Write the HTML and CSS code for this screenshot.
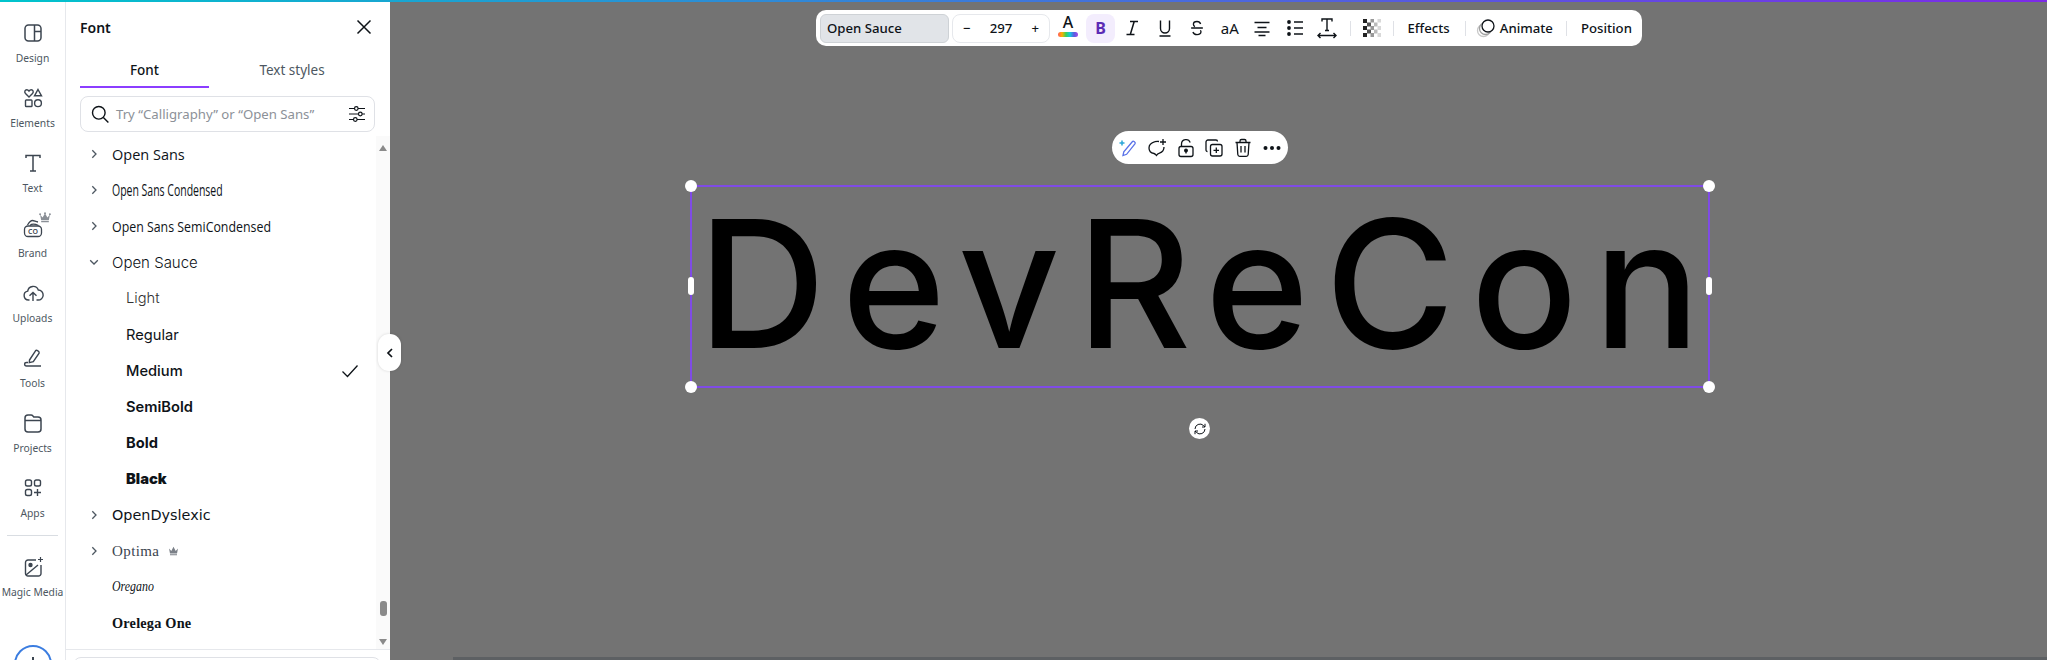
FILE: index.html
```html
<!DOCTYPE html>
<html lang="en">
<head>
  <meta charset="UTF-8">
  <title>Font panel</title>
  <link rel="stylesheet" href="styles.css">
</head>
<body>
  <div class="topline"></div>
  <div class="main">
    <nav class="rail">
      <div class="rail-item">
        <svg width="24" height="24" viewBox="0 0 24 24" fill="none" stroke="#3c4550" stroke-width="1.5"><rect x="4" y="4" width="16" height="16" rx="3.500"/><path d="M13.500 4v16M13.500 10.500H20"/></svg>
        <span>Design</span>
      </div>
      <div class="rail-item">
        <svg width="24" height="24" viewBox="0 0 24 24" fill="none" stroke="#3c4550" stroke-width="1.400"><path d="M8 11 4.500 7.500C3 5.800 4 3.700 5.800 3.700c1 0 1.700.6 2.200 1.300.5-.7 1.200-1.300 2.200-1.300 1.800 0 2.800 2.100 1.300 3.800z"/><path d="M17 3.500 20.500 9.800h-7z"/><rect x="4.500" y="14" width="6.500" height="6.500" rx=".8"/><circle cx="17" cy="17.200" r="3.400"/></svg>
        <span>Elements</span>
      </div>
      <div class="rail-item">
        <svg width="24" height="24" viewBox="0 0 24 24" fill="none" stroke="#3c4550" stroke-width="1.500"><path d="M5 7V4.500h14V7M12 4.500V20M9 20h6"/></svg>
        <span>Text</span>
      </div>
      <div class="rail-item">
        <svg class="rail-crown" width="12" height="11" viewBox="0 0 11 10" fill="#8a8f96"><circle cx="1" cy="2" r=".9"/><circle cx="5.500" cy="1" r=".9"/><circle cx="10" cy="2" r=".9"/><path d="M1 2.500 3.300 5 5.500 1 7.700 5 10 2.500 9 7.500H2zM2 8.300h7v1H2z"/></svg>
        <svg width="24" height="24" viewBox="0 0 24 24" fill="none" stroke="#3c4550" stroke-width="1.300"><path d="M6.500 9c1.500-2.500 3-4.500 5-4.500 1.500 0 3 1 5.500 1.500M9 9.500c1.500-1.500 5-1.500 8.500 0"/><rect x="3.500" y="10" width="17" height="10.500" rx="3.500"/><text x="12" y="17.800" text-anchor="middle" font-family="Noto Sans" font-size="7" font-weight="600" fill="#3c4550" stroke="none">CO</text></svg>
        <span>Brand</span>
      </div>
      <div class="rail-item">
        <svg width="24" height="24" viewBox="0 0 24 24" fill="none" stroke="#3c4550" stroke-width="1.400"><path d="M8.500 19H7.500a4.500 4.500 0 0 1-.8-8.900A5.500 5.500 0 0 1 17.300 9a5 5 0 0 1-.3 10h-1.500"/><path d="M12 20v-8M8.500 14.800 12 11.500l3.500 3.300"/></svg>
        <span>Uploads</span>
      </div>
      <div class="rail-item">
        <svg width="24" height="24" viewBox="0 0 24 24" fill="none" stroke="#3c4550" stroke-width="1.400"><path d="M8.500 14 14.500 4.800c1-1.300 4.300.7 3.600 2.400l-5.800 8.500-4 .9z"/><path d="M7 16.500H5.500c-2.500 0-2.500 3.500 0 3.500H20"/></svg>
        <span>Tools</span>
      </div>
      <div class="rail-item">
        <svg width="24" height="24" viewBox="0 0 24 24" fill="none" stroke="#3c4550" stroke-width="1.500"><path d="M4 7a3 3 0 0 1 3-3h3c1 0 1.500.4 2.200 1.200l.6.800H17a3 3 0 0 1 3 3v9a3 3 0 0 1-3 3H7a3 3 0 0 1-3-3z"/><path d="M4 9.500h16"/></svg>
        <span>Projects</span>
      </div>
      <div class="rail-item">
        <svg width="24" height="24" viewBox="0 0 24 24" fill="none" stroke="#3c4550" stroke-width="1.400"><rect x="4.500" y="4" width="6" height="6" rx="1.800"/><rect x="13.500" y="4" width="6" height="6" rx="1.800"/><rect x="4.500" y="13.500" width="6" height="6" rx="1.800"/><path d="M16.500 13v7M13 16.500h7"/></svg>
        <span>Apps</span>
      </div>
      <div class="rail-line"></div>
      <div class="rail-item">
        <svg width="24" height="24" viewBox="0 0 24 24" fill="none" stroke="#3c4550" stroke-width="1.400"><path d="M15 5H7a2.500 2.500 0 0 0-2.500 2.500v11A2.500 2.500 0 0 0 7 21h10.500a2.500 2.500 0 0 0 2.500-2.500V10"/><path d="M5 20 17 10"/><circle cx="9.500" cy="10" r="1.500" fill="#3c4550"/><path d="M19.500 2v5M17 4.500h5" stroke-width="1.200"/></svg>
        <span>Magic Media</span>
      </div>
      <div class="rail-circle"><div class="rail-plus"></div></div>
    </nav>

    <aside class="panel">
      <div class="panel-head">
        <h1>Font</h1>
        <svg width="18" height="18" viewBox="0 0 18 18" fill="none" stroke="#0e1318" stroke-width="1.500"><path d="M2.500 2.500l13 13M15.500 2.500l-13 13"/></svg>
      </div>
      <div class="tabs">
        <div class="tab active">Font</div>
        <div class="tab">Text styles</div>
      </div>
      <div class="search">
        <svg width="20" height="20" viewBox="0 0 20 20" fill="none" stroke="#0e1318" stroke-width="1.400"><circle cx="8.800" cy="8.800" r="6.300"/><path d="M13.400 13.400l5 5"/></svg>
        <span class="search-text">Try “Calligraphy” or “Open Sans”</span>
        <svg width="18" height="18" viewBox="0 0 18 18" fill="none" stroke="#0e1318" stroke-width="1.200"><path d="M1 3.500h5.500M10 3.500h7M1 9h9.500M14 9h3M1 14.500h4.500M9 14.500h8"/><circle cx="8.300" cy="3.500" r="1.800"/><circle cx="12.300" cy="9" r="1.800"/><circle cx="7.300" cy="14.500" r="1.800"/></svg>
      </div>
      <div class="list-wrap">
        <div class="list">
          <div class="row"><svg class="chev" width="12" height="12" viewBox="0 0 12 12"><path d="M4.300 2.200 8 6 4.300 9.800"/></svg><span class="f-sans">Open Sans</span></div>
          <div class="row"><svg class="chev" width="12" height="12" viewBox="0 0 12 12"><path d="M4.300 2.200 8 6 4.300 9.800"/></svg><span class="f-cond">Open Sans Condensed</span></div>
          <div class="row"><svg class="chev" width="12" height="12" viewBox="0 0 12 12"><path d="M4.300 2.200 8 6 4.300 9.800"/></svg><span class="f-semi">Open Sans SemiCondensed</span></div>
          <div class="row"><svg class="chev" width="12" height="12" viewBox="0 0 12 12"><path d="M2.200 4.300 6 8l3.800-3.700"/></svg><span class="f-sauce">Open Sauce</span></div>
          <div class="row sub w300">Light</div>
          <div class="row sub w400">Regular</div>
          <div class="row sub w500">Medium
            <svg class="check" width="18" height="18" viewBox="0 0 18 18" fill="none" stroke="#0e1318" stroke-width="1.300"><path d="M1.500 9.500l5 5L16.500 3.500"/></svg>
          </div>
          <div class="row sub w600">SemiBold</div>
          <div class="row sub w700">Bold</div>
          <div class="row sub w900">Black</div>
          <div class="row"><svg class="chev" width="12" height="12" viewBox="0 0 12 12"><path d="M4.300 2.200 8 6 4.300 9.800"/></svg><span class="f-dys">OpenDyslexic</span></div>
          <div class="row"><svg class="chev" width="12" height="12" viewBox="0 0 12 12"><path d="M4.300 2.200 8 6 4.300 9.800"/></svg><span class="f-opt">Optima</span>
            <svg class="crown" width="11" height="10" viewBox="0 0 11 10" fill="#7b8088"><path d="M1 2.500 3.300 5 5.500.8 7.700 5 10 2.500 9 7.500H2zM2 8.300h7v1H2z"/></svg>
          </div>
          <div class="row"><span class="chev-gap"></span><span class="f-ore">Oregano</span></div>
          <div class="row"><span class="chev-gap"></span><span class="f-orl">Orelega One</span></div>
        </div>
        <div class="scroll">
          <div class="arrow-up"></div>
          <div class="thumb"></div>
          <div class="arrow-down"></div>
        </div>
      </div>
      <div class="panel-foot"><div class="foot-box"></div></div>
      <div class="collapse">
        <svg width="8" height="12" viewBox="0 0 8 12" fill="none" stroke="#0e1318" stroke-width="1.700"><path d="M6 2 2 6l4 4"/></svg>
      </div>
    </aside>

    <main class="stage">
      <div class="toolbar">
        <div class="font-box">Open Sauce</div>
        <div class="size-box"><span>−</span><span>297</span><span>+</span></div>
        <div class="tool color-tool">
          <span class="color-a">A</span>
          <span class="rainbow"></span>
        </div>
        <div class="bold-tool">B</div>
        <div class="tool">
          <svg width="20" height="20" viewBox="0 0 20 20" fill="none" stroke="#0e1318" stroke-width="1.500"><path d="M8 3.500h8M4.500 16.500h8M12.200 3.500 8.300 16.500"/></svg>
        </div>
        <div class="tool">
          <svg width="20" height="20" viewBox="0 0 20 20" fill="none" stroke="#0e1318" stroke-width="1.400"><path d="M5.500 2.500v8a4.500 4.500 0 0 0 9 0v-8M4.500 18h11"/></svg>
        </div>
        <div class="tool">
          <svg width="18" height="18" viewBox="0 0 20 20" fill="none" stroke="#0e1318" stroke-width="1.500"><path d="M14 5.500c-.5-1.800-2-2.700-4-2.700-2.300 0-4 1.200-4 3.100 0 1.200.7 2.100 1.700 2.600M13.800 12.500c.4.600.6 1.100.6 1.800 0 1.800-1.900 3-4.400 3-2.300 0-4-1-4.500-2.900M3.500 10h13"/></svg>
        </div>
        <div class="tool case-tool">aA</div>
        <div class="tool">
          <svg width="20" height="20" viewBox="0 0 20 20" fill="none" stroke="#0e1318" stroke-width="1.500"><path d="M2.500 4.500h15M5.500 9.500h9M2.500 14h15M6.500 17.500h7" /></svg>
        </div>
        <div class="tool">
          <svg width="20" height="20" viewBox="0 0 20 20" fill="none" stroke="#0e1318" stroke-width="1.500"><circle cx="4" cy="4" r="1.900" fill="#0e1318" stroke="none"/><circle cx="4" cy="10" r="1.900" fill="#0e1318" stroke="none"/><circle cx="4" cy="16" r="1.900" fill="#0e1318" stroke="none"/><path d="M9 4h9M9 10h9M9 16h9"/></svg>
        </div>
        <div class="tool">
          <svg width="22" height="22" viewBox="0 0 22 22" fill="none" stroke="#0e1318" stroke-width="1.400"><path d="M6 4.500V2h10v2.500M11 2v11.500M9 13.500h4M2 18.500h18M4.500 16 2 18.500 4.500 21M17.500 16 20 18.500 17.500 21"/></svg>
        </div>
        <div class="sep first-sep"></div>
        <div class="tool trans-tool">
          <svg width="18" height="18" viewBox="0 0 18 18"><rect width="18" height="18" fill="#fff"/><path fill="#222" d="M0 0h4v4H0zM0 7h4v4H0zM0 14h4v4H0z"/><path fill="#555" d="M4 3.500h4v4H4zM4 10.500h4v4H4z"/><path fill="#999" d="M7.500 0h3.500v3.500H7.500zM7.500 7h3.500v4H7.500zM7.500 14h3.500v4H7.500z"/><path fill="#bbb" d="M11 3.500h3.500v4H11zM11 10.500h3.500v4H11z"/><path fill="#d8d8d8" d="M14.500 0H18v3.500h-3.500zM14.500 7H18v4h-3.500zM14.500 14H18v4h-3.500z"/></svg>
        </div>
        <div class="sep"></div>
        <div class="text-btn effects">Effects</div>
        <div class="sep"></div>
        <div class="text-btn animate">
          <svg width="20" height="20" viewBox="0 0 20 20" fill="none"><circle cx="7.500" cy="12.500" r="6" stroke="#c8c8c8" stroke-width="1.300"/><circle cx="9.500" cy="10.500" r="6" fill="#fff" stroke="#a0a0a0" stroke-width="1.300"/><circle cx="12" cy="8" r="6" fill="#fff" stroke="#0e1318" stroke-width="1.300"/></svg>
          Animate
        </div>
        <div class="sep"></div>
        <div class="text-btn position">Position</div>
      </div>

      <div class="pill">
        <svg width="20" height="20" viewBox="0 0 20 20" fill="none" stroke="#5a72e8" stroke-width="1.300"><path d="M5 17.500l.8-3.600L14.500 3.500c.8-.9 3.300 1 2.600 2.200L8.600 16.300z"/><path d="M4 2.500v5M1.500 5h5" stroke="#2aa7d8" stroke-width="1.500"/></svg>
        <svg width="20" height="20" viewBox="0 0 20 20" fill="none" stroke="#0e1318" stroke-width="1.300"><path d="M12 3.500a7.500 7.500 0 0 0-4 .2C4.500 4.700 2 7 2 10c0 2.800 2 5 5 5.500 1 .2 2 1.500 2.500 2 .5-1 1.500-2 3-2.400 2.800-.8 4.500-3 4.500-6"/><path d="M16 1v6M13 4h6"/></svg>
        <svg width="20" height="20" viewBox="0 0 20 20" fill="none" stroke="#0e1318" stroke-width="1.300"><rect x="3" y="8.500" width="14" height="10" rx="2"/><path d="M5.500 8.500V6a4.500 4.500 0 0 1 8.700-1.500"/><circle cx="10" cy="12.500" r="1.300" fill="#0e1318"/><path d="M10 13v2.500"/></svg>
        <svg width="20" height="20" viewBox="0 0 20 20" fill="none" stroke="#0e1318" stroke-width="1.300"><rect x="6.500" y="6.500" width="11.500" height="11.500" rx="2"/><path d="M3.500 13.500a1.500 1.500 0 0 1-1.500-1.500V4a2 2 0 0 1 2-2h8a1.500 1.500 0 0 1 1.500 1.500M12.300 9.500v5.500M9.500 12.300H15"/></svg>
        <svg width="20" height="20" viewBox="0 0 20 20" fill="none" stroke="#0e1318" stroke-width="1.300"><path d="M2.500 4.500h15M7 4.500V3a1.500 1.500 0 0 1 1.500-1.500h3A1.500 1.500 0 0 1 13 3v1.500M4 4.500l.8 12a2 2 0 0 0 2 1.800h6.400a2 2 0 0 0 2-1.800l.8-12M8 8v6.500M12 8v6.500"/></svg>
        <svg width="20" height="20" viewBox="0 0 20 20" fill="#0e1318"><circle cx="3.500" cy="10" r="2"/><circle cx="10" cy="10" r="2"/><circle cx="16.500" cy="10" r="2"/></svg>
      </div>

      <div class="selection">
        <div class="words">DevReCon</div>
        <div class="corner tl"></div>
        <div class="corner tr"></div>
        <div class="corner bl"></div>
        <div class="corner br"></div>
        <div class="side left"></div>
        <div class="side right"></div>
      </div>

      <div class="rotate">
        <svg width="14" height="14" viewBox="0 0 14 14" fill="none" stroke="#0e1318" stroke-width="1"><path d="M2 7a5 5 0 0 1 8.500-3.500L12 5M12 7a5 5 0 0 1-8.500 3.500L2 9"/><path d="M12 1.800V5H9M2 12.200V9h3"/></svg>
      </div>
      <div class="stage-bottom"></div>
    </main>
  </div>
</body>
</html>
```

FILE: styles.css
```css
* {
  box-sizing: border-box;
}
html, body {
  height: 100%;
}
body {
  margin: 0;
  display: flex;
  flex-direction: column;
  overflow: hidden;
  font-family: "Noto Sans", sans-serif;
  color: #0e1318;
  background: #fff;
}
.topline {
  height: 2px;
  flex: none;
  background: linear-gradient(90deg, #00c4cc, #7d2ae8);
}
.main {
  flex: 1;
  display: flex;
  min-height: 0;
}

/* left rail */
.rail {
  width: 66px;
  flex: none;
  border-right: 1px solid #e6e8ec;
  padding-top: 19px;
  display: flex;
  flex-direction: column;
  align-items: center;
  overflow: hidden;
}
.rail-item {
  position: relative;
  width: 65px;
  height: 65px;
  flex: none;
  display: flex;
  flex-direction: column;
  align-items: center;
}
.rail-item svg {
  flex: none;
}
.rail-item span {
  margin-top: 5px;
  font-size: 10.300px;
  line-height: 16px;
  color: #4d5761;
  white-space: nowrap;
}
.rail-item .rail-crown {
  position: absolute;
  top: -4px;
  left: 39px;
}
.rail-line {
  width: 51px;
  height: 1px;
  flex: none;
  background: #d9dde2;
  margin: -6px 0 19px;
}
.rail-circle {
  width: 38px;
  height: 38px;
  flex: none;
  margin-top: 25px;
  border-radius: 50%;
  border: 2px solid #3b7de0;
  display: flex;
  justify-content: center;
}
.rail-plus {
  width: 2px;
  height: 3px;
  margin-top: 10px;
  background: #3c4550;
}

/* font panel */
.panel {
  position: relative;
  width: 324px;
  flex: none;
  display: flex;
  flex-direction: column;
  z-index: 2;
  background: #fff;
}
.panel-head {
  height: 50px;
  flex: none;
  padding: 0 17px 0 14px;
  display: flex;
  align-items: center;
  justify-content: space-between;
}
.panel-head h1 {
  margin: 0;
  font-size: 14px;
  font-weight: 600;
}
.tabs {
  display: flex;
  flex: none;
  margin: 0 14px;
  height: 36px;
}
.tab {
  flex: none;
  width: 129px;
  text-align: center;
  font-size: 13.500px;
  line-height: 37px;
  color: #4d5761;
}
.tab + .tab {
  width: 166px;
}
.tab.active {
  color: #0e1318;
  font-weight: 500;
  border-bottom: 2px solid #8b3dff;
}
.search {
  margin: 8px 15px 0 14px;
  height: 36px;
  flex: none;
  border: 1px solid #dfe1e6;
  border-radius: 8px;
  display: flex;
  align-items: center;
  padding: 0 8px 0 9px;
  gap: 6px;
}
.search-text {
  flex: 1;
  font-size: 13.200px;
  color: #8c9198;
  white-space: nowrap;
}
.list-wrap {
  flex: 1;
  min-height: 0;
  display: flex;
  margin-top: 4px;
}
.list {
  flex: 1;
  min-width: 0;
}
.row {
  height: 36.100px;
  display: flex;
  align-items: center;
  padding-left: 22px;
  white-space: nowrap;
}
.chev {
  fill: none;
  stroke: #4d5761;
  stroke-width: 1.300;
  margin-right: 12px;
  flex: none;
}
.chev-gap {
  width: 12px;
  margin-right: 12px;
  flex: none;
}
.f-sans, .f-cond, .f-semi, .f-ore {
  display: inline-block;
  transform-origin: left center;
}
.f-sans, .f-cond, .f-semi {
  font-family: "Open Sans", sans-serif;
}
.f-sans {
  font-size: 14.500px;
}
.f-cond {
  font-size: 16px;
  transform: scaleX(.655);
}
.f-semi {
  font-size: 15px;
  transform: scaleX(.825);
}
.f-sauce {
  font-family: Inter, sans-serif;
  font-size: 15px;
  font-weight: 300;
}
.sub {
  padding-left: 60px;
  font-family: Inter, sans-serif;
  font-size: 14.700px;
}
.w300 { font-weight: 300; color: #333; }
.w400 { font-weight: 400; }
.w500 { font-weight: 500; }
.w600 { font-weight: 600; }
.w700 { font-weight: 700; }
.w900 { font-weight: 900; }
.check {
  margin-left: auto;
  margin-right: 17px;
}
.f-dys {
  font-family: "DejaVu Sans", sans-serif;
  font-size: 14.400px;
}
.f-opt {
  font-family: "Liberation Serif", serif;
  font-size: 15px;
  letter-spacing: .4px;
  color: #3c4550;
}
.crown {
  margin-left: 9px;
}
.f-ore {
  font-family: "Liberation Serif", serif;
  font-style: italic;
  font-size: 14px;
  transform: scaleX(.85);
}
.f-orl {
  font-family: "Liberation Serif", serif;
  font-weight: 700;
  font-size: 14.300px;
  letter-spacing: .2px;
}
.scroll {
  width: 14px;
  flex: none;
  background: #fafafa;
  display: flex;
  flex-direction: column;
  align-items: center;
}
.arrow-up, .arrow-down {
  width: 0;
  height: 0;
  border-left: 4.500px solid transparent;
  border-right: 4.500px solid transparent;
}
.arrow-up {
  margin-top: 9px;
  border-bottom: 6px solid #8a8a8a;
}
.arrow-down {
  margin-bottom: 4px;
  border-top: 6px solid #8a8a8a;
}
.thumb {
  width: 7px;
  height: 15px;
  margin-top: auto;
  margin-bottom: 23px;
  border-radius: 3px;
  background: #8a8a8a;
}
.panel-foot {
  height: 11px;
  flex: none;
  border-top: 1px solid #e6e8ec;
  padding: 7px 9px 0 7px;
  overflow: hidden;
}
.foot-box {
  height: 30px;
  border: 1px solid #dfe1e6;
  border-radius: 8px;
}
.collapse {
  position: absolute;
  top: 332px;
  left: 312px;
  width: 23px;
  height: 37px;
  border-radius: 11px;
  background: #fff;
  box-shadow: 0 0 3px rgba(0, 0, 0, .15);
  display: flex;
  align-items: center;
  justify-content: center;
}

/* canvas */
.stage {
  flex: 1;
  position: relative;
  display: flex;
  flex-direction: column;
  min-width: 0;
  background: #737373;
}
.toolbar {
  align-self: flex-start;
  margin: 8px 0 0 426px;
  height: 36px;
  background: #fff;
  border-radius: 10px;
  display: flex;
  align-items: center;
  padding: 0 10px 0 4px;
  font-size: 13.200px;
  font-weight: 500;
}
.font-box {
  width: 129px;
  height: 29px;
  border: 1px solid #ced2d6;
  border-radius: 6px;
  background: #e1e4e8;
  padding-left: 6px;
  line-height: 27px;
}
.size-box {
  width: 98px;
  height: 29px;
  margin-left: 3px;
  border: 1px solid #e6e8ec;
  border-radius: 8px;
  display: flex;
  align-items: center;
  justify-content: space-between;
  padding: 0 10px;
}
.tool {
  width: 32.500px;
  height: 29px;
  flex: none;
  display: flex;
  align-items: center;
  justify-content: center;
}
.color-tool {
  width: 32px;
  margin-left: 2px;
  flex-direction: column;
}
.color-a {
  font-size: 16px;
  line-height: 17px;
  margin-top: -5px;
}
.rainbow {
  width: 20px;
  height: 5px;
  margin-top: 1px;
  border-radius: 3px;
  background: linear-gradient(90deg, #ff5c5c, #ffb000, #39d353, #14c8e0, #5a5be0, #a24be8);
}
.bold-tool {
  width: 29px;
  height: 29px;
  margin: 0 1px 0 2px;
  flex: none;
  border-radius: 8px;
  background: #f3edfd;
  color: #5b2bb5;
  font-size: 16px;
  font-weight: 700;
  text-align: center;
  line-height: 29px;
}
.case-tool {
  font-size: 15px;
  font-weight: 400;
}
.sep {
  width: 1px;
  height: 15px;
  flex: none;
  background: #dfe1e6;
}
.first-sep {
  margin-left: 6px;
}
.trans-tool {
  width: 42px;
}
.text-btn {
  display: flex;
  align-items: center;
  white-space: nowrap;
}
.effects {
  margin: 0 15px 0 14px;
}
.animate {
  margin: 0 13px 0 10px;
  gap: 4px;
}
.position {
  margin-left: 14px;
}
.pill {
  align-self: flex-start;
  margin: 85px 0 0 722px;
  width: 176px;
  height: 33px;
  padding: 0 6px 0 6px;
  background: #fff;
  border-radius: 17px;
  display: flex;
  align-items: center;
  justify-content: space-between;
}

/* the selected text sits freely on the canvas */
.selection {
  position: absolute;
  left: 300px;
  top: 183px;
  width: 1020px;
  height: 203px;
  border: 2px solid #7f4be6;
}
.words {
  position: absolute;
  left: 6px;
  top: -10px;
  font-family: Inter, sans-serif;
  font-weight: 500;
  font-size: 177px;
  line-height: 214px;
  letter-spacing: 16px;
  color: #000;
  white-space: nowrap;
}
.corner {
  position: absolute;
  width: 12px;
  height: 12px;
  border-radius: 50%;
  background: #fff;
}
.tl { left: -7px; top: -7px; }
.tr { right: -7px; top: -7px; }
.bl { left: -7px; bottom: -7px; }
.br { right: -7px; bottom: -7px; }
.side {
  position: absolute;
  top: 90px;
  width: 6px;
  height: 18px;
  border-radius: 3px;
  background: #fff;
}
.left { left: -4px; }
.right { right: -4px; }
.rotate {
  position: absolute;
  left: 799px;
  top: 416px;
  width: 21px;
  height: 21px;
  border-radius: 50%;
  background: #fff;
  display: flex;
  align-items: center;
  justify-content: center;
}
.stage-bottom {
  height: 3px;
  flex: none;
  margin: auto 0 0 63px;
  background: #5d6063;
}
```
